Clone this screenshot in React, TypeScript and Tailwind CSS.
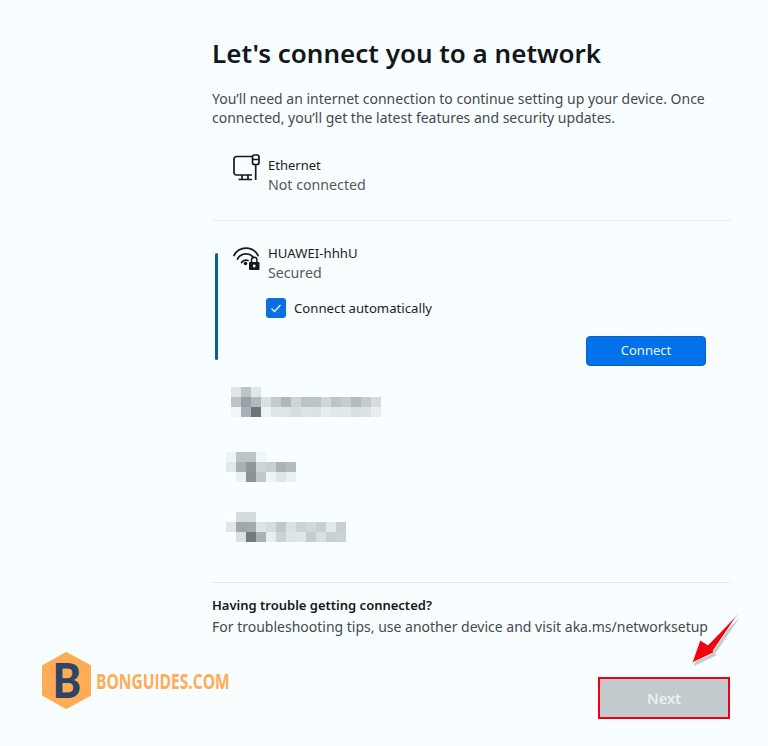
const font = "font-['Noto_Sans','Open_Sans',sans-serif]";

// mosaic rows: blurred networks, one colour per 10px cell
const blurOne: string[][] = [
  ["#e0e6e6", "#bcc4c6", "#dfe8e8"],
  ["#bcc4c6", "#99a2a6", "#b0b9bb", "#d8e0e0", "#c3cbcd", "#aeb7b9", "#ccd4d4", "#bac3c5", "#bcc5c6", "#cfd7d8", "#bcc4c7", "#c5cdce", "#b4bcbf", "#c3cbcd", "#d6dcdd"],
  ["#f0f6f7", "#a8b1b3", "#69767a", "#eef4f4", "#dfe6e8", "#dde5e6", "#d5dde0", "#dde4e6", "#d9e1e4", "#e7edef", "#e2e8ea", "#e1e8ea", "#d9e0e3", "#dbe2e4", "#e8eef0"],
];
const blurTwo: string[][] = [
  ["#eef5f5", "#bcc4c6", "#bcc4c6", "#eff6f7"],
  ["#e1e9ea", "#a8b1b4", "#8f999c", "#ccd4d6", "#c8d0d2", "#aab3b6", "#b4bcbf", "#f8fdfe"],
  ["#fafeff", "#eaf1f1", "#8b9598", "#c0c9ca", "#eef4f5", "#dfe6e8", "#eaf1f3"],
];
const blurThree: string[][] = [
  ["#fafeff", "#d5dcdc", "#d5dcdc"],
  ["#e0e7e8", "#9fa8ab", "#a2abad", "#dee5e7", "#d5dcde", "#c0c9ca", "#dbe2e3", "#cbd3d4", "#d1d9da", "#c8d0d2", "#e2e9eb", "#c7cfd1"],
  ["#fafeff", "#dae1e2", "#6f7b7e", "#a9b2b4", "#e8eff0", "#cbd3d4", "#dee5e6", "#dfe6e7", "#c5cdcf", "#d9e0e2", "#c8d0d2", "#ccd4d6"],
];

function Mosaic({ rows, className }: { rows: string[][]; className: string }) {
  return (
    <div className={className}>
      {rows.map((row, i) => (
        <div key={i} className="flex h-[10px]">
          {row.map((c, j) => (
            <div key={j} className="h-[10px] w-[10px]" style={{ backgroundColor: c }} />
          ))}
        </div>
      ))}
    </div>
  );
}

function EthernetIcon() {
  return (
    <svg width="28" height="28" viewBox="0 0 28 28" fill="none" stroke="#16191b" strokeWidth="1.7" className="shrink-0">
      <path d="M19 2.500H3.500A2.500 2.500 0 0 0 1 5v13.500A2.500 2.500 0 0 0 3.500 21H19" />
      <path d="M9 21v4.500M15 21v4.500M5.500 25.500h13.500" />
      <rect x="19.500" y="1" width="6.500" height="9.500" rx="2" />
      <path d="M19.500 5.500h6.500M22.700 10.500V26" />
    </svg>
  );
}

function WifiLockIcon() {
  return (
    <svg width="28" height="24" viewBox="0 0 28 24" fill="none" stroke="#16191b" strokeWidth="1.700" strokeLinecap="round" className="shrink-0">
      <path d="M1 8.500A13.500 13.500 0 0 1 25 8.500" />
      <path d="M4.500 12A9.500 9.500 0 0 1 20.500 10.500" />
      <path d="M8.500 15.500A5.500 5.500 0 0 1 15 13.500" />
      <circle cx="12.500" cy="16.500" r="1.800" fill="#16191b" stroke="none" />
      <rect x="16" y="15" width="10.500" height="8" rx="1" fill="#16191b" stroke="none" />
      <path d="M18.500 15v-2a2.700 2.700 0 0 1 5.400 0v2" strokeWidth="1.500" />
      <circle cx="21.200" cy="19" r="1.400" fill="#f8feff" stroke="none" />
    </svg>
  );
}

export default function App() {
  return (
    <div className={`relative flex h-[746px] w-[768px] flex-col overflow-hidden bg-[#f8feff] pl-[212px] pr-[37px] text-[#1a1d1f] ${font}`}>
      <h1 className="mt-[33px] text-[26px] font-semibold leading-[40px] text-[#14171a]">Let's connect you to a network</h1>
      <p className="mt-[16px] text-[14px] leading-[19px] text-[#45494c]">
        You’ll need an internet connection to continue setting up your device. Once connected, you’ll get the latest features and security updates.
      </p>

      <div className="ml-[21px] mt-[27px] flex gap-[7px]">
        <EthernetIcon />
        <div className="pt-[1px]">
          <div className="text-[13px] leading-[20px]">Ethernet</div>
          <div className="text-[14.200px] leading-[20px] text-[#55595c]">Not connected</div>
        </div>
      </div>

      <div className="mt-[25px] h-px bg-[#e8eeef]" />

      <div className="ml-[3px] mt-[32px] flex h-[107px] gap-[14px]">
        <div className="w-[3px] rounded-full bg-[#0a5aa8]" />
        <div className="flex-1">
          <div className="-mt-[9px] flex gap-[7px] pl-[1px]">
            <div className="pt-[3px]"><WifiLockIcon /></div>
            <div>
              <div className="text-[13.200px] leading-[19px]">HUAWEI-hhhU</div>
              <div className="text-[14.200px] leading-[20px] text-[#55595c]">Secured</div>
            </div>
          </div>
          <div className="ml-[34px] mt-[15px] flex items-center gap-[8px]">
            <div className="flex h-[20px] w-[20px] items-center justify-center rounded-[3px] bg-[#0b6fde]">
              <svg width="12" height="12" viewBox="0 0 12 12" fill="none" stroke="#eaf5ff" strokeWidth="1.300">
                <path d="M1.500 6.500 4.500 9.500 10.500 3" />
              </svg>
            </div>
            <span className="text-[13.200px] leading-[20px]">Connect automatically</span>
          </div>
          <div className="mt-[18px] flex justify-end pr-[25px]">
            <div className="flex h-[30px] w-[120px] items-center justify-center rounded-[4px] border border-[#0a62c4] bg-[#0272ea] text-[13px] text-[#e6f5ff]">Connect</div>
          </div>
        </div>
      </div>

      <Mosaic rows={blurOne} className="ml-[19px] mt-[27px]" />
      <Mosaic rows={blurTwo} className="ml-[14px] mt-[35px]" />
      <Mosaic rows={blurThree} className="ml-[14px] mt-[30px]" />

      <div className="mt-[40px] h-px bg-[#e4eaeb]" />

      <div className="mt-[13px] text-[13px] font-semibold leading-[18px] text-[#14171a]">Having trouble getting connected?</div>
      <div className="mt-[3px] whitespace-nowrap text-[14px] leading-[20px] text-[#45494c]">For troubleshooting tips, use another device and visit aka.ms/networksetup</div>

      <div className="mt-[40px] flex justify-end pr-[1px]">
        <div className="flex h-[42px] w-[132px] items-center justify-center border-2 border-[#f00012] bg-[#c3cbce] text-[15px] font-medium text-[#eef4f6]">Next</div>
      </div>

      {/* watermark */}
      <div className="absolute left-[41px] top-[652px] flex items-center">
        <div className="relative flex h-[57px] w-[51px] items-center justify-center">
          <svg width="51" height="57" viewBox="0 0 51 57" className="absolute inset-0">
            <polygon points="25,1 49,14 49,43 25,56 2,43 2,14" fill="#ffac57" stroke="#ffac57" strokeWidth="2" strokeLinejoin="round" />
          </svg>
          <span className="relative -mt-[1px] origin-center scale-x-[0.9] font-['Lato',sans-serif] text-[48px] font-black leading-none text-[#2e4468]">B</span>
        </div>
        <span className="ml-[4px] mt-[2px] origin-left scale-x-[0.74] whitespace-nowrap font-['Open_Sans',sans-serif] text-[21px] font-bold text-[#ffac57]">BONGUIDES.COM</span>
      </div>

      {/* annotation arrow */}
      <svg width="60" height="60" viewBox="0 0 60 60" className="absolute left-[686px] top-[610px]">
        <polygon points="7,55 15,32 23,37 53,6 28,43 30,44" fill="#8a8f90" opacity="0.45" transform="translate(1,1)" />
        <polygon points="6,53 14,30 22,35 52,4 27,41 29,42" fill="#f5000f" stroke="#f7e8e8" strokeWidth="1" />
      </svg>
    </div>
  );
}
